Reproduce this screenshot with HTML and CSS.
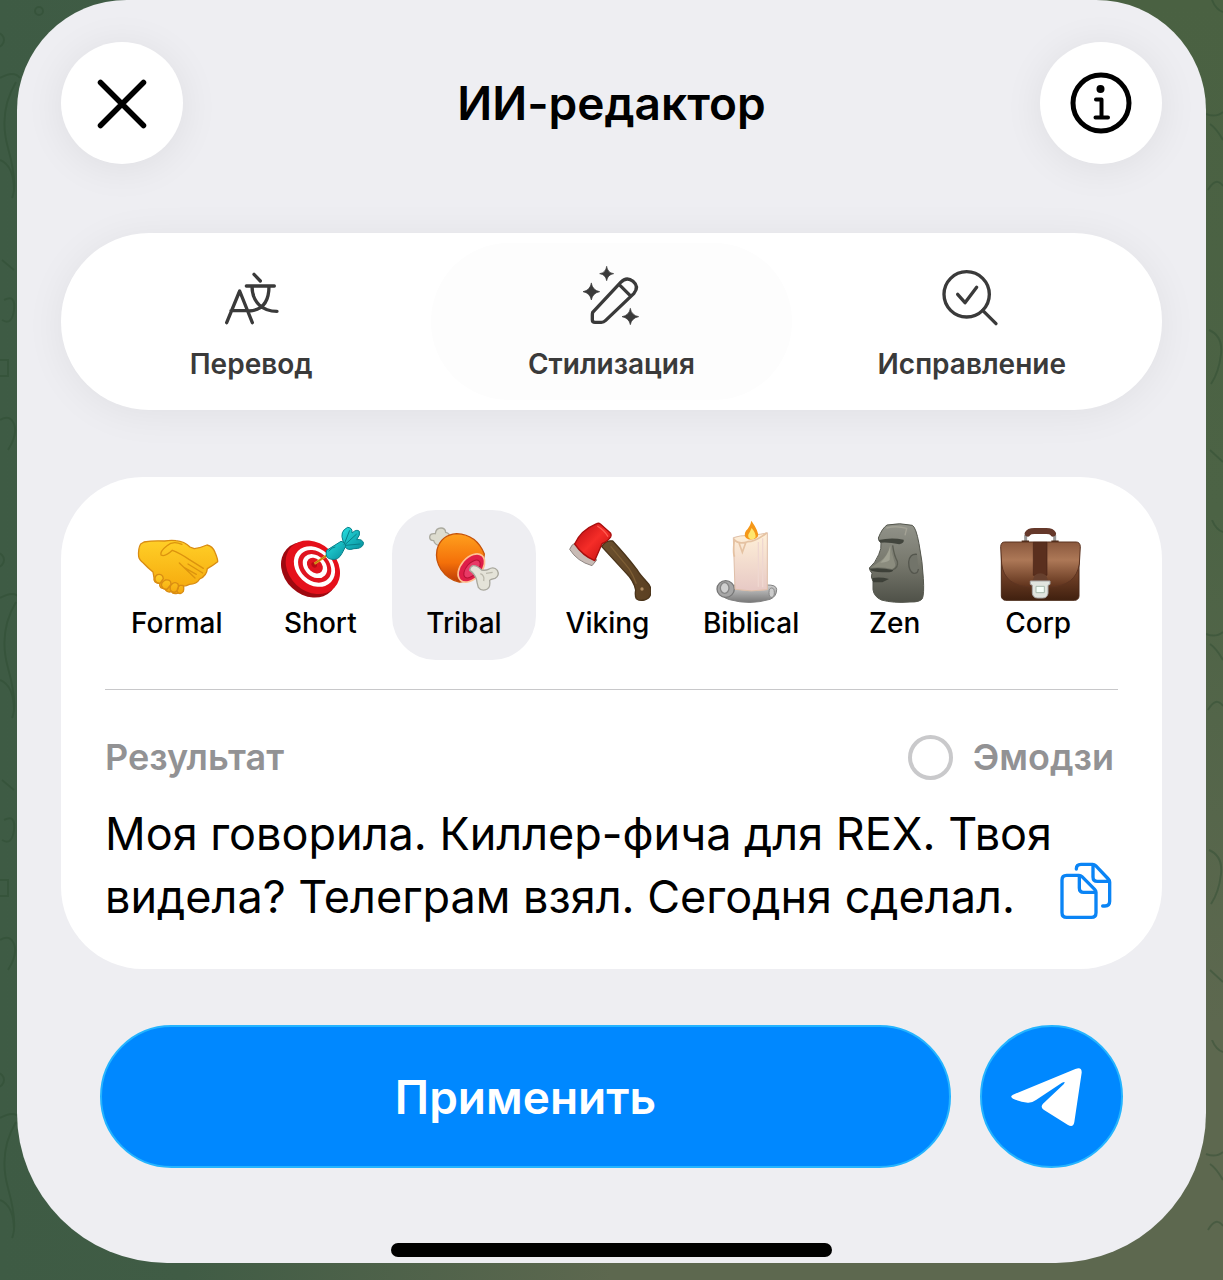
FILE: index.html
```html
<!DOCTYPE html>
<html lang="ru">
<head>
    <meta charset="UTF-8">
    <meta name="viewport" content="width=device-width, initial-scale=1.0">
    <title>ИИ-редактор</title>
    <link rel="stylesheet" href="styles.css">
</head>
<body>

<svg class="wallpaper" aria-hidden="true">
    <defs>
        <pattern id="doodles" width="1223" height="520" patternUnits="userSpaceOnUse">
            <g fill="none" stroke="#2c4a30" stroke-width="2">
                <circle cx="39" cy="11" r="4"/>
                <circle cx="-3" cy="40" r="7"/>
                <path d="M0 78q14-8 20 0M16 82q-18 30-8 66t4 50M0 160q14 6 14 30"/>
                <path d="M2 260l12 10M4 300q12-6 10 10t-12 10M0 420q10-6 14 4t-6 26M0 360h8v16h-8"/>
                <path d="M1212 0q4 10 11 12M1206 114q10 4 17-2M1210 124q6 4 13 16M1208 190q8-14 15-4M1209 330q14 6 12 24t-10 30M1210 450l13 12"/>
            </g>
        </pattern>
    </defs>
    <rect width="100%" height="100%" fill="url(#doodles)"/>
</svg>

<main class="sheet">
    <header class="header">
        <button class="round-btn" aria-label="Закрыть">
            <svg viewBox="0 0 60 60" width="60" height="60"><path d="M8.500 9.500l43 43M51.500 9.500l-43 43" fill="none" stroke="#000" stroke-width="5.500" stroke-linecap="round"/></svg>
        </button>
        <h1 class="title">ИИ-редактор</h1>
        <button class="round-btn" aria-label="Информация">
            <svg viewBox="0 0 64 64" width="64" height="64" fill="none" stroke="#000" stroke-linecap="round" stroke-linejoin="round">
                <circle cx="32" cy="32" r="28" stroke-width="5"/>
                <circle cx="31.500" cy="18" r="4" fill="#000" stroke="none"/>
                <path d="M27 28.500h5.500v18M26.500 46.500h12.500" stroke-width="4"/>
            </svg>
        </button>
    </header>

    <nav class="tabs">
        <button class="tab">
            <svg class="tab-icon" viewBox="117 48 192 192">
                <path d="M140 218l39-95 38 95M153 182h52M222 73l19 20M199 108h84M216 109c0 48 32 75 75 75M267 109c0 48-22 72-60 74"/>
            </svg>
            <span>Перевод</span>
        </button>
        <button class="tab active">
            <svg class="tab-icon" viewBox="201 48 192 192">
                <path d="M242 187l84-90q18-19 37-3t3 36l-85 81q-6 6-13 6h-19q-8 0-8-8v-13q0-5 1-9zM321 103l33 33"/>
                <path class="spark" d="M284 50q3 18 21 21q-18 3-21 21q-3-18-21-21q18-3 21-21zM238 100q4 21 25 25q-21 4-25 25q-4-21-25-25q21-4 25-25zM355 176q4 20 25 24q-21 4-25 24q-4-20-25-24q21-4 25-24z"/>
            </svg>
            <span>Стилизация</span>
        </button>
        <button class="tab">
            <svg class="tab-icon" viewBox="237 48 192 192">
                <circle cx="317" cy="133" r="68"/>
                <path d="M365 181l40 40M290 133l22 25 35-46"/>
            </svg>
            <span>Исправление</span>
        </button>
    </nav>

    <section class="card">
        <div class="styles">
            <button class="style">
                <svg class="emoji" viewBox="66 54 264 264">
                    <defs><linearGradient id="hand" x2="0" y2="1"><stop stop-color="#ffcf27"/><stop offset="1" stop-color="#f5a70c"/></linearGradient></defs>
                    <g fill="url(#hand)" stroke="#d98c12" stroke-width="4" stroke-linejoin="round">
                        <path d="M99 126q26-5 62-3q18-3 34-1q25 2 42 19l13 5q20-3 38-11q17 3 24 22q9 22 8 28q-14 11-31 21q-2 22-23 31q-9 16-31 16q-10 6-19 5q-4 20-17 22q-14 3-17-5q-16 4-20-9q-18 0-16-15q-20-2-17-18l-3-17q-18-15-29-27q-13-10-14-20q-2-24 6-37z"/>
                        <path d="M139 224q-10 7-6 18q4 9 15 7l9-13q-2-16-18-12zM163 240q-14 8-11 18q4 12 17 9l11-14q0-16-17-13zM187 249q-12 7-9 20q4 10 15 7q13-10 8-24q-6-6-14-3zM207 256q-10 8-8 20q8 10 18-2q3-13-1-18z"/>
                    </g>
                    <path d="M213 133q-27-12-45 4q-22 17-18 28q12 7 34-14q22 8 50 27l43 27M205 189l47 45M220 203l36 20M231 192l44 27" fill="none" stroke="#dc930e" stroke-width="4" stroke-linecap="round"/>
                </svg>
                <span>Formal</span>
            </button>
            <button class="style">
                <svg class="emoji" viewBox="498 54 264 264">
                    <defs><linearGradient id="dart" x2="1" y2="1"><stop stop-color="#27dfe0"/><stop offset="1" stop-color="#078f9c"/></linearGradient></defs>
                    <g transform="rotate(43 603 205)">
                        <ellipse cx="602" cy="212" rx="92" ry="75" fill="#9e0910"/>
                        <ellipse cx="605" cy="199" rx="89" ry="72" fill="#e5101b"/>
                        <ellipse cx="607" cy="194" rx="68" ry="54" fill="#fff"/>
                        <ellipse cx="607" cy="193" rx="55" ry="43" fill="#df1420"/>
                        <ellipse cx="607" cy="192" rx="41" ry="31" fill="#fff"/>
                        <ellipse cx="606" cy="191" rx="27" ry="20" fill="#df1420"/>
                        <ellipse cx="603" cy="191" rx="9" ry="7" fill="#b80a14"/>
                    </g>
                    <path d="M613 191l44-29" stroke="#e7a51e" stroke-width="7"/>
                    <path d="M613 191l44-29" stroke="#8c5b12" stroke-width="2"/>
                    <g fill="url(#dart)" stroke="#087f89" stroke-width="3" stroke-linejoin="round">
                        <path d="M699 123q-11-29 14-41q15 1 13 17q14-13 22-5q4 10-8 25q17-3 21 11q-4 17-29 16q-20 7-27-6z"/>
                        <path d="M650 151q-7 24 15 27q20 4 31-18l11-21q0-12-14-15z"/>
                    </g>
                    <path d="M702 134l17-43M706 133l34-31M706 136l45-4M656 154q11-13 20-13" fill="none" stroke="#087f89" stroke-width="3"/>
                </svg>
                <span>Short</span>
            </button>
            <button class="style selected">
                <svg class="emoji" viewBox="120 54 264 264">
                    <defs><linearGradient id="meat" x2="0" y2="1"><stop stop-color="#ffa01e"/><stop offset=".6" stop-color="#f47009"/><stop offset="1" stop-color="#bd3d05"/></linearGradient></defs>
                    <path d="M183 137q-18 0-22-15q-12 0-12-11q1-12 17-10q2-17 17-17q13 0 14 13q13 3 12 15l-10 16z" fill="#dddccf" stroke="#aaa99e" stroke-width="4"/>
                    <path d="M230 101Q290 104 313 162Q312 190 290 215Q265 247 238 246Q205 240 183 208Q165 180 171 150Q182 105 230 101z" fill="url(#meat)" stroke="#c65208" stroke-width="4"/>
                    <ellipse cx="274" cy="204" rx="49" ry="31" transform="rotate(-49 274 204)" fill="#df1e49" stroke="#ffc092" stroke-width="5"/>
                    <ellipse cx="276" cy="207" rx="32" ry="17" transform="rotate(-49 276 207)" fill="#e83966" stroke="#b61235" stroke-width="3"/>
                    <path d="M279 197q12-1 26 13q13 2 20-2q17-10 27 3q8 15-7 24q-14 3-16 6q3 20-7 26q-17 9-27-5q-4-13-6-26q-7-17-20-25q1-11 10-14z" fill="#e4e3d8" stroke="#a9a89e" stroke-width="4"/>
                    <path d="M301 221q14 6 10 22M318 220l20-3" fill="none" stroke="#bbb9ac" stroke-width="4"/>
                </svg>
                <span>Tribal</span>
            </button>
            <button class="style">
                <svg class="emoji" viewBox="549 54 264 264">
                    <defs>
                        <linearGradient id="wood"><stop stop-color="#6b502e"/><stop offset="1" stop-color="#5b4022"/></linearGradient>
                        <linearGradient id="blade" x2="1" y2="1"><stop stop-color="#b80910"/><stop offset=".5" stop-color="#f52d28"/><stop offset="1" stop-color="#bd0b0c"/></linearGradient>
                    </defs>
                    <path d="M665 139q13-19 33-16q42 45 73 86q8 14 27 34q17 17 15 32q-1 21-20 25q-13 4-24-4q-5-10-2-26q-6-28-28-50z" fill="url(#wood)" stroke="#493319" stroke-width="4"/>
                    <path d="M692 139l55 67q12 18 22 45" fill="none" stroke="#7c5d34" stroke-width="4"/>
                    <path d="M590 126q-17 8-21 22q22 36 67 49l14-17-44-55z" fill="#c8bbb5" stroke="#8e8581" stroke-width="3"/>
                    <path d="M650 71q6-3 11 1l31 28q3 5 0 11q-8 12-26 20l-22 51q-36-15-60-50q18-41 66-61z" fill="url(#blade)" stroke="#a70d0c" stroke-width="4" stroke-linejoin="round"/>
                    <path d="M652 78q22 14 32 32" fill="none" stroke="#ff5d52" stroke-width="4"/>
                    <circle cx="786" cy="267" r="5" fill="#b08d62"/>
                </svg>
                <span>Viking</span>
            </button>
            <button class="style">
                <svg class="emoji" viewBox="54 54 264 264">
                    <defs>
                        <linearGradient id="wax" x2="0" y2="1"><stop stop-color="#fff0d8"/><stop offset="1" stop-color="#e7c9c5"/></linearGradient>
                        <linearGradient id="tray" x2="0" y2="1"><stop stop-color="#d0d0d0"/><stop offset="1" stop-color="#777"/></linearGradient>
                    </defs>
                    <path d="M95 278q7-17 43-23h95q29-1 30 13q0 22-20 30q-60 18-121 1q-24-7-27-21z" fill="url(#tray)" stroke="#818181" stroke-width="3"/>
                    <ellipse cx="110" cy="267" rx="26" ry="25" fill="#a6a6a6" stroke="#777" stroke-width="4"/>
                    <ellipse cx="107" cy="264" rx="13" ry="16" fill="#cfcfcf" stroke="#858585" stroke-width="4"/>
                    <ellipse cx="248" cy="278" rx="8" ry="14" fill="#ccc" stroke="#888" stroke-width="3"/>
                    <path d="M133 113q19-7 49-7q39-3 53-8v171q-48 8-97-1z" fill="url(#wax)" stroke="#dfbfa8" stroke-width="3"/>
                    <path d="M134 116q13 19 42 9q23 0 57-26M136 120q-5 42 1 50M149 126l11 31 11-31" fill="none" stroke="#e5c2a2" stroke-width="5"/>
                    <path d="M208 126v134M221 115v147" stroke="#efd7d0" stroke-width="4"/>
                    <path d="M187 62q24 34 20 47q-9 12-29 9q-18-9-7-26q13-13 16-30z" fill="#f59718"/>
                    <path d="M188 84q15 18 11 29q-11 9-20 0q-4-7 3-16z" fill="#ffe66d"/>
                </svg>
                <span>Biblical</span>
            </button>
            <button class="style">
                <svg class="emoji" viewBox="483 54 264 264">
                    <defs><linearGradient id="stone" x2="0" y2="1"><stop stop-color="#92938a"/><stop offset=".5" stop-color="#77786d"/><stop offset="1" stop-color="#4f5148"/></linearGradient></defs>
                    <path d="M591 75q39-8 76 1q11 6 20 55q11 56 13 104q3 47-3 61q-8 11-37 10q-50 4-86-6q-22-10-25-31v-25q-8-14-3-24q-7-8-8-16q18-15 28-40q9-18 7-36q-8-4-8-14q11-29 26-39z" fill="url(#stone)" stroke="#55574e" stroke-width="3"/>
                    <path d="M566 120q38-9 75-1q3 9-13 14q-30-7-56-5z" fill="#42453d"/>
                    <path d="M600 134q-4 30-30 50q-14 10-28 19q34-4 64 4q14-5 8-20q-8-24-14-53z" fill="#8b8c7e"/>
                    <path d="M601 138q-8 30-30 50q18 0 28-8z" fill="#a1a293"/>
                    <path d="M608 136q4 30 14 48q4 18-14 26" fill="none" stroke="#5b5d52" stroke-width="4"/>
                    <path d="M539 206q34-4 70 4q2 7-20 7q-28 0-45-5zM547 234q25-4 50 3l-20 10h-28z" fill="#3d4038"/>
                    <path d="M681 163q-22-3-25 23q0 29 15 34q13 1 14-13" fill="#72746a" stroke="#55574e" stroke-width="4"/>
                    <path d="M589 84q31-8 61 1l-5 21" fill="none" stroke="#a3a295" stroke-width="4"/>
                </svg>
                <span>Zen</span>
            </button>
            <button class="style">
                <svg class="emoji" viewBox="162 54 264 264">
                    <defs>
                        <linearGradient id="bag" x2="0" y2="1"><stop stop-color="#9b694c"/><stop offset=".5" stop-color="#754329"/><stop offset="1" stop-color="#40200f"/></linearGradient>
                        <linearGradient id="flap" x2="0" y2="1"><stop stop-color="#8a583d"/><stop offset=".4" stop-color="#ad7857"/><stop offset="1" stop-color="#5f321b"/></linearGradient>
                    </defs>
                    <path d="M257 123v-18M344 123v-18" stroke="#999" stroke-width="9"/>
                    <path d="M263 101q4-8 20-8h36q16 0 20 8" fill="none" stroke="#65382a" stroke-width="18" stroke-linecap="round"/>
                    <path d="M245 125h22M334 125h22" stroke="#4d2a1b" stroke-width="7"/>
                    <rect x="184" y="131" width="233" height="170" rx="13" fill="url(#bag)" stroke="#4a2918" stroke-width="3"/>
                    <path d="M194 126h214q12 0 13 14l-3 52q-10 66-89 69h-57q-79-3-87-69l-3-52q1-14 12-14z" fill="url(#flap)" stroke="#5d3421" stroke-width="3"/>
                    <path d="M280 127h41v99h-41z" fill="#5a2f1e" stroke="#472316" stroke-width="2"/>
                    <path d="M278 242q3-22 23-22t23 22z" fill="#67402e"/>
                    <path d="M271 243h59v10l-6 3v24q-2 14-16 14h-15q-14 0-16-14v-24l-6-3z" fill="#e1e5df" stroke="#aaa" stroke-width="3"/>
                    <path d="M288 259h25v19h-25z" fill="#f6fff9" stroke="#a7b9ad" stroke-width="3"/>
                </svg>
                <span>Corp</span>
            </button>
        </div>

        <div class="result-head">
            <h2 class="result-title">Результат</h2>
            <label class="emoji-toggle" for="emoji">
                <input type="checkbox" id="emoji">
                Эмодзи
            </label>
        </div>

        <div class="result">
            <p class="result-text">Моя говорила. Киллер-фича для REX. Твоя видела? Телеграм взял. Сегодня сделал.</p>
            <button class="copy-btn" aria-label="Копировать">
                <svg viewBox="114 63 180 180" width="60" height="60" fill="none" stroke="#0a84f5" stroke-width="10" stroke-linecap="round" stroke-linejoin="round">
                    <path d="M140 106h37q5 0 9 4l38 38q4 4 4 9v61q0 14-14 14h-74q-14 0-14-14v-98q0-14 14-14zM178 107v37q0 13 13 13h36"/>
                    <path d="M169 87q0-14 14-14h35q5 0 9 4l38 40q4 4 4 9v58q0 14-14 14h-7M219 75v36q0 13 13 13h36"/>
                </svg>
            </button>
        </div>
    </section>

    <div class="actions">
        <button class="apply-btn">Применить</button>
        <button class="send-btn" aria-label="Отправить">
            <svg viewBox="148 165 252 252" width="84" height="84"><path d="M157 284l187-77q20-8 19 11l-22 148q-3 18-19 9l-73-46q-11-7-2-18l62-58q8-11-5-5l-78 52q-12 9-25 8-24-3-44-12-11-7 0-12z" fill="#fff"/></svg>
        </button>
    </div>

    <div class="home-bar"></div>
</main>

</body>
</html>
```
FILE: styles.css
```css
* {
    box-sizing: border-box;
}
body {
    margin: 0;
    min-height: 100vh;
    font-family: Inter, "Liberation Sans", sans-serif;
    color: #000;
    background:
        linear-gradient(90deg, #3e5b44 0%, #405c45 15%, rgba(64, 92, 69, 0) 50%),
        linear-gradient(180deg, #4a6142 0%, #4c6345 40%, #5d684f 80%);
}
button {
    padding: 0;
    border: none;
    background: none;
    font-family: inherit;
    color: inherit;
    cursor: pointer;
}
svg {
    display: block;
}
.wallpaper {
    position: absolute;
    top: 0;
    left: 0;
    width: 100%;
    height: 100%;
    opacity: 0.4;
}
.sheet {
    position: relative;
    margin: 0 17px;
    padding: 42px 44px 6px;
    border-radius: 110px 110px 150px 150px;
    background: #eeeef2;
}

/* header */
.header {
    display: flex;
    align-items: center;
    justify-content: space-between;
    margin-bottom: 69px;
}
.title {
    margin: 0;
    font-size: 46px;
    line-height: 56px;
    font-weight: 600;
}
.round-btn {
    display: flex;
    align-items: center;
    justify-content: center;
    width: 122px;
    height: 122px;
    border-radius: 50%;
    background: #fff;
    box-shadow: 0 4px 40px rgba(0, 0, 0, 0.07);
}

/* tabs */
.tabs {
    display: grid;
    grid-template-columns: repeat(3, 1fr);
    padding: 10px;
    margin-bottom: 67px;
    border-radius: 88px;
    background: #fff;
    box-shadow: 0 4px 40px rgba(0, 0, 0, 0.06);
}
.tab {
    display: flex;
    flex-direction: column;
    align-items: center;
    gap: 17px;
    padding: 23px 0 19px;
    border-radius: 78px;
    font-size: 28px;
    line-height: 34px;
    font-weight: 600;
    color: #3a3a3a;
}
.tab.active {
    background: #fdfdfd;
}
.tab-icon {
    width: 64px;
    height: 64px;
    fill: none;
    stroke: #3a3a3a;
    stroke-width: 10;
    stroke-linecap: round;
    stroke-linejoin: round;
}
.spark {
    fill: #3a3a3a;
    stroke-width: 2;
}

/* card */
.card {
    padding: 33px 44px 41px;
    border-radius: 82px;
    background: #fff;
}
.styles {
    display: grid;
    grid-template-columns: repeat(7, 1fr);
    padding: 0 8px 29px 0;
    border-bottom: 1px solid #c8c8ca;
}
.style {
    display: flex;
    flex-direction: column;
    align-items: center;
    padding: 8px 0 20px;
    border-radius: 44px;
    font-size: 28px;
    line-height: 34px;
    font-weight: 500;
}
.style.selected {
    background: #eeeef2;
}
.emoji {
    width: 88px;
    height: 88px;
}
.result-head {
    display: flex;
    align-items: center;
    justify-content: space-between;
    padding: 44px 4px 22px 0;
    font-size: 36px;
    line-height: 46px;
    color: #929294;
}
.result-title {
    margin: 0;
    font-size: inherit;
    font-weight: 600;
}
.emoji-toggle {
    display: flex;
    align-items: center;
    gap: 20px;
    font-weight: 600;
}
.emoji-toggle input {
    appearance: none;
    width: 45px;
    height: 45px;
    margin: 0;
    border: 4px solid #c9c9cb;
    border-radius: 50%;
}
.emoji-toggle input:checked {
    background: #0088ff;
}
.result {
    display: flex;
    align-items: flex-end;
}
.result-text {
    flex: 1;
    margin: 0;
    font-size: 45px;
    line-height: 63px;
}
.copy-btn {
    margin-bottom: 7px;
}

/* bottom buttons */
.actions {
    display: flex;
    gap: 29px;
    padding: 56px 39px 75px;
}
.apply-btn,
.send-btn {
    height: 143px;
    border: 2px solid #24b4ff;
    border-radius: 72px;
    background: #0088ff;
    color: #fff;
}
.apply-btn {
    flex: 1;
    font-size: 46px;
    font-weight: 600;
}
.send-btn {
    display: flex;
    align-items: center;
    justify-content: center;
    width: 143px;
}
.home-bar {
    width: 40%;
    height: 14px;
    margin: 0 auto;
    border-radius: 7px;
    background: #000;
}
```
